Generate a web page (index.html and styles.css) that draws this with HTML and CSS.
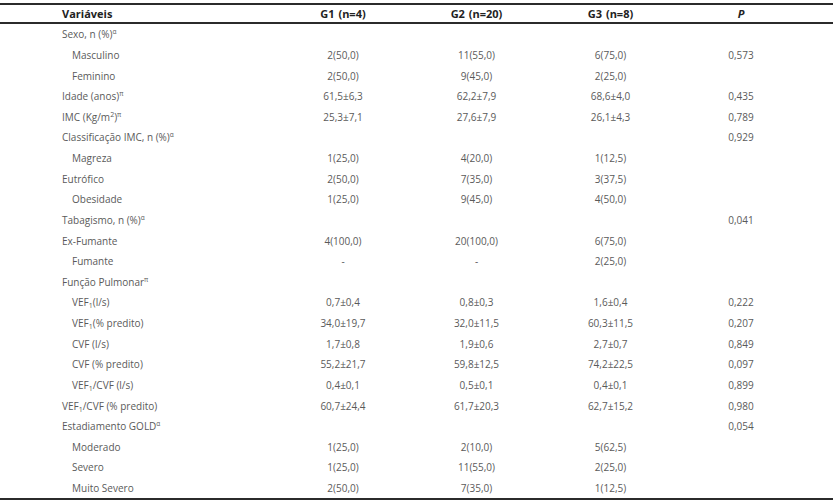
FILE: index.html
```html
<!DOCTYPE html>
<html lang="pt">
<head>
<meta charset="utf-8">
<link rel="stylesheet" href="styles.css">
</head>
<body>
<table class="tbl">
  <colgroup>
    <col class="c-label"><col class="c-g1"><col class="c-g2"><col class="c-g3"><col class="c-p"><col class="c-end">
  </colgroup>
  <thead>
    <tr><th class="lab">Variáveis</th><th>G1 (n=4)</th><th>G2 (n=20)</th><th>G3 (n=8)</th><th class="pv">P</th><th></th></tr>
  </thead>
  <tbody>
    <tr><td class="lab">Sexo, n (%)<sup>α</sup></td><td></td><td></td><td></td><td></td><td></td></tr>
    <tr><td class="lab ind">Masculino</td><td>2(50,0)</td><td>11(55,0)</td><td>6(75,0)</td><td>0,573</td><td></td></tr>
    <tr><td class="lab ind">Feminino</td><td>2(50,0)</td><td>9(45,0)</td><td>2(25,0)</td><td></td><td></td></tr>
    <tr><td class="lab">Idade (anos)<sup>π</sup></td><td>61,5±6,3</td><td>62,2±7,9</td><td>68,6±4,0</td><td>0,435</td><td></td></tr>
    <tr><td class="lab">IMC (Kg/m<sup class="sq">2</sup>)<sup>π</sup></td><td>25,3±7,1</td><td>27,6±7,9</td><td>26,1±4,3</td><td>0,789</td><td></td></tr>
    <tr><td class="lab">Classificação IMC, n (%)<sup>α</sup></td><td></td><td></td><td></td><td>0,929</td><td></td></tr>
    <tr><td class="lab ind">Magreza</td><td>1(25,0)</td><td>4(20,0)</td><td>1(12,5)</td><td></td><td></td></tr>
    <tr><td class="lab">Eutrófico</td><td>2(50,0)</td><td>7(35,0)</td><td>3(37,5)</td><td></td><td></td></tr>
    <tr><td class="lab ind">Obesidade</td><td>1(25,0)</td><td>9(45,0)</td><td>4(50,0)</td><td></td><td></td></tr>
    <tr><td class="lab">Tabagismo, n (%)<sup>α</sup></td><td></td><td></td><td></td><td>0,041</td><td></td></tr>
    <tr><td class="lab">Ex-Fumante</td><td>4(100,0)</td><td>20(100,0)</td><td>6(75,0)</td><td></td><td></td></tr>
    <tr><td class="lab ind">Fumante</td><td>-</td><td>-</td><td>2(25,0)</td><td></td><td></td></tr>
    <tr><td class="lab">Função Pulmonar<sup>π</sup></td><td></td><td></td><td></td><td></td><td></td></tr>
    <tr><td class="lab ind">VEF<sub>1</sub>(l/s)</td><td>0,7±0,4</td><td>0,8±0,3</td><td>1,6±0,4</td><td>0,222</td><td></td></tr>
    <tr><td class="lab ind">VEF<sub>1</sub>(% predito)</td><td>34,0±19,7</td><td>32,0±11,5</td><td>60,3±11,5</td><td>0,207</td><td></td></tr>
    <tr><td class="lab ind">CVF (l/s)</td><td>1,7±0,8</td><td>1,9±0,6</td><td>2,7±0,7</td><td>0,849</td><td></td></tr>
    <tr><td class="lab ind">CVF (% predito)</td><td>55,2±21,7</td><td>59,8±12,5</td><td>74,2±22,5</td><td>0,097</td><td></td></tr>
    <tr><td class="lab ind">VEF<sub>1</sub>/CVF (l/s)</td><td>0,4±0,1</td><td>0,5±0,1</td><td>0,4±0,1</td><td>0,899</td><td></td></tr>
    <tr><td class="lab">VEF<sub>1</sub>/CVF (% predito)</td><td>60,7±24,4</td><td>61,7±20,3</td><td>62,7±15,2</td><td>0,980</td><td></td></tr>
    <tr><td class="lab">Estadiamento GOLD<sup>α</sup></td><td></td><td></td><td></td><td>0,054</td><td></td></tr>
    <tr><td class="lab ind">Moderado</td><td>1(25,0)</td><td>2(10,0)</td><td>5(62,5)</td><td></td><td></td></tr>
    <tr><td class="lab ind">Severo</td><td>1(25,0)</td><td>11(55,0)</td><td>2(25,0)</td><td></td><td></td></tr>
    <tr><td class="lab ind">Muito Severo</td><td>2(50,0)</td><td>7(35,0)</td><td>1(12,5)</td><td></td><td></td></tr>
  </tbody>
</table>
</body>
</html>
```
FILE: styles.css
```css
html, body {
  margin: 0;
  padding: 0;
  background: #ffffff;
}

.tbl {
  margin-top: 3px;
  width: 833px;
  border-collapse: collapse;
  table-layout: fixed;
  font-family: "Open Sans", "Noto Sans", sans-serif;
  font-size: 10px;
  color: #5a5a5a;
  border-top: 2px solid #2b2b2b;
  border-bottom: 2px solid #2b2b2b;
}

.c-label { width: 276px; }
.c-g1 { width: 134px; }
.c-g2 { width: 133px; }
.c-g3 { width: 135px; }
.c-p { width: 126px; }
.c-end { width: 29px; }

.tbl th {
  height: 17px;
  padding: 0;
  font-size: 11px;
  font-weight: 700;
  color: #222222;
  text-align: center;
  line-height: 17px;
  word-spacing: 1px;
  border-bottom: 2px solid #2b2b2b;
}

.tbl th.pv {
  font-style: italic;
}

.tbl td {
  height: 20.64px;
  padding: 0;
  text-align: center;
  line-height: 14px;
  white-space: nowrap;
}

.tbl .lab {
  text-align: left;
  padding-left: 62px;
}

.tbl .ind {
  padding-left: 72px;
}

sup {
  font-size: 6.5px;
  vertical-align: 4px;
  line-height: 0;
}

sup.sq {
  font-size: 7px;
}

sub {
  font-size: 7px;
  vertical-align: -2px;
  line-height: 0;
}
```
